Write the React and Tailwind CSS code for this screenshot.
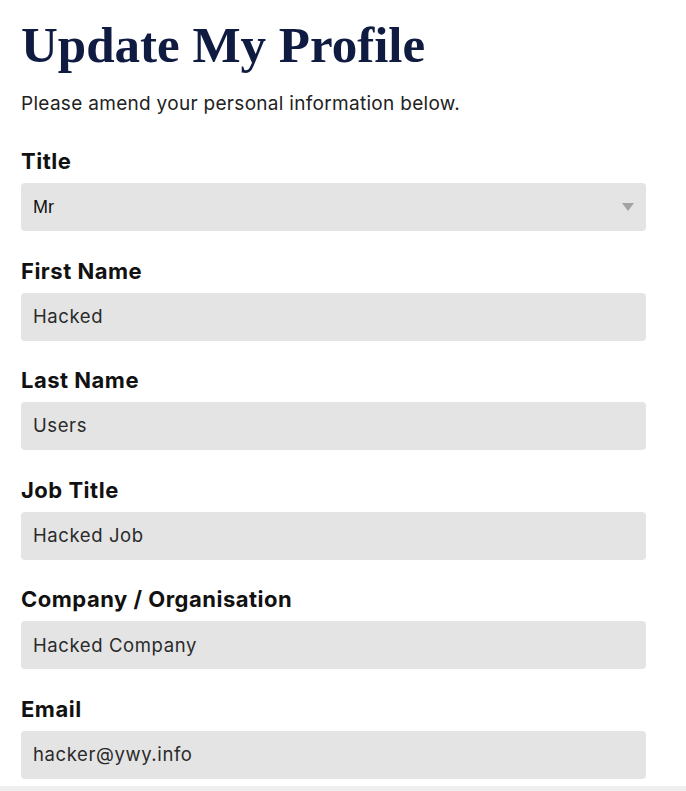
import React from "react";

const fields = [
  { label: "First Name", value: "Hacked" },
  { label: "Last Name", value: "Users" },
  { label: "Job Title", value: "Hacked Job" },
  { label: "Company / Organisation", value: "Hacked Company" },
  { label: "Email", value: "hacker@ywy.info" },
];

function Label({ children }) {
  return (
    <div className="text-[22px] leading-[26px] font-bold text-[#111111] mb-[9px] tracking-[0.5px]">
      {children}
    </div>
  );
}

export default function App() {
  return (
    <div
      className="relative w-[686px] h-[791px] bg-white overflow-hidden"
      style={{ fontFamily: "Inter, 'Noto Sans', sans-serif" }}
    >
      <div className="pl-[21px] pr-[40px] pt-[15px]">
        <h1
          className="text-[51px] leading-[60px] font-bold text-[#0f1b41]"
          style={{ fontFamily: "'Liberation Serif', 'DejaVu Serif', serif" }}
        >
          Update My Profile
        </h1>
        <p className="mt-[17px] text-[19px] leading-[24px] tracking-[0.3px] text-[#222222]">
          Please amend your personal information below.
        </p>
        <div className="mt-[32px] flex flex-col gap-[26.6px]">
          <div>
            <Label>Title</Label>
            <div className="h-[48px] w-[625px] rounded-[4px] bg-[#e4e4e4] flex items-center justify-between pl-[12px] pr-[12px]">
              <span
                className="text-[18px] text-[#111111]"
                style={{ fontFamily: "'Liberation Sans', Arial, sans-serif" }}
              >
                Mr
              </span>
              <svg width="12" height="8" viewBox="0 0 12 8">
                <path d="M0 0 L12 0 L6 8 Z" fill="#a3a3a3" />
              </svg>
            </div>
          </div>
          {fields.map((f) => (
            <div key={f.label}>
              <Label>{f.label}</Label>
              <div className="h-[48px] w-[625px] rounded-[4px] bg-[#e4e4e4] flex items-center pl-[12px]">
                <span className="text-[18.5px] tracking-[0.6px] text-[#2a2a2a]">{f.value}</span>
              </div>
            </div>
          ))}
        </div>
      </div>
      <div className="absolute left-0 bottom-0 w-full h-[5px] bg-[#efefef]" />
    </div>
  );
}
